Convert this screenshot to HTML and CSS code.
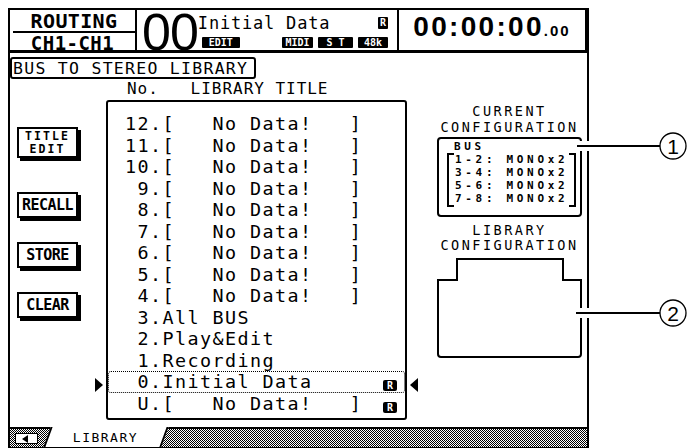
FILE: index.html
```html
<!DOCTYPE html>
<html lang="en">

<head>
    <meta charset="UTF-8">
    <meta name="viewport" content="width=device-width, initial-scale=1.0">
    <title>Bus to Stereo Library</title>
    <link rel="stylesheet" href="styles.css">
</head>

<body>

    <div class="lcd">
        <!-- status bar -->
        <div class="status">
            <div class="routing">
                <div class="routing-top">ROUTING</div>
                <div class="routing-bottom">CH1-CH1</div>
            </div>
            <div class="scene">
                <div class="scene-num">00</div>
                <div class="scene-info">
                    <div class="scene-title"><span>Initial Data</span><span class="tag tag-r">R</span></div>
                    <div class="scene-flags">
                        <span class="tag tag-edit">EDIT</span>
                        <span class="tag tag-midi">MIDI</span>
                        <span class="tag tag-st">S T</span>
                        <span class="tag tag-fs">48k</span>
                    </div>
                </div>
            </div>
            <div class="clock"><span>00:00:00<small>.00</small></span></div>
        </div>

        <div class="page">
            <div class="page-title">BUS TO STEREO LIBRARY</div>

            <div class="page-body">
                <div class="buttons">
                    <div class="btn btn-title">TITLE<br>EDIT</div>
                    <div class="btn">RECALL</div>
                    <div class="btn">STORE</div>
                    <div class="btn">CLEAR</div>
                </div>

                <div class="library">
                    <div class="library-head">No.   LIBRARY TITLE</div>
                    <div class="library-list">
                        <div class="row"><span>12.[   No Data!   ]</span></div>
                        <div class="row"><span>11.[   No Data!   ]</span></div>
                        <div class="row"><span>10.[   No Data!   ]</span></div>
                        <div class="row"><span> 9.[   No Data!   ]</span></div>
                        <div class="row"><span> 8.[   No Data!   ]</span></div>
                        <div class="row"><span> 7.[   No Data!   ]</span></div>
                        <div class="row"><span> 6.[   No Data!   ]</span></div>
                        <div class="row"><span> 5.[   No Data!   ]</span></div>
                        <div class="row"><span> 4.[   No Data!   ]</span></div>
                        <div class="row"><span> 3.All BUS</span></div>
                        <div class="row"><span> 2.Play&amp;Edit</span></div>
                        <div class="row"><span> 1.Recording</span></div>
                        <div class="row selected"><span> 0.Initial Data</span><span class="badge">R</span></div>
                        <div class="row"><span> U.[   No Data!   ]</span><span class="badge">R</span></div>
                    </div>
                </div>

                <div class="config">
                    <div class="config-head">CURRENT<br>CONFIGURATION</div>
                    <div class="config-box">
                        <div class="config-bus">BUS</div>
                        <div class="bracket">1-2: MONOx2<br>3-4: MONOx2<br>5-6: MONOx2<br>7-8: MONOx2</div>
                    </div>
                    <div class="config-head lib-head">LIBRARY<br>CONFIGURATION</div>
                    <svg class="lib-shape" width="146" height="101" viewBox="0 0 146 101">
                        <path d="M20 1 H126 V22 H144 V96 Q144 99 141 99 H4 Q1 99 1 96 V22 H20 Z"
                            fill="none" stroke="#000" stroke-width="2" />
                    </svg>
                </div>
            </div>
        </div>

        <!-- page tabs -->
        <div class="tabs">
            <span class="tab-back"></span>
            <span class="tab"><span>LIBRARY</span></span>
        </div>
    </div>

    <svg class="callouts" width="695" height="448" viewBox="0 0 695 448">
        <g stroke-linecap="butt">
            <line x1="579" y1="146" x2="660" y2="146" stroke="#fff" stroke-width="10" />
            <line x1="577" y1="146" x2="660" y2="146" stroke="#000" stroke-width="2" />
            <line x1="579" y1="313" x2="660" y2="313" stroke="#fff" stroke-width="10" />
            <line x1="576" y1="313" x2="660" y2="313" stroke="#000" stroke-width="2" />
        </g>
        <circle cx="673" cy="146" r="13" fill="#fff" stroke="#000" stroke-width="1.3" />
        <circle cx="673" cy="313" r="13" fill="#fff" stroke="#000" stroke-width="1.3" />
        <text x="673" y="153.5" class="callout-num">1</text>
        <text x="673" y="320.5" class="callout-num">2</text>
    </svg>

</body>

</html>
```

FILE: styles.css
```css
body {
    margin: 0;
    background: #fff;
    color: #000;
    font-family: "DejaVu Sans Mono", monospace;
}

.lcd {
    margin: 8px 0 0 8px;
    width: 581px;
    box-sizing: border-box;
    border: 2px solid #000;
    border-bottom: none;
}

/* status bar */
.status {
    display: flex;
    height: 40px;
    border-bottom: 3px solid #000;
    border-right: 2px solid #000;
}

.routing {
    width: 125px;
    border-right: 2px solid #000;
    font-weight: bold;
    text-align: center;
}

.routing-top {
    height: 21px;
    margin-left: 3px;
    border-bottom: 2px solid #000;
    font-size: 20px;
    line-height: 22px;
    letter-spacing: 0.36px;
}

.routing-bottom {
    height: 17px;
    font-size: 19px;
    line-height: 21.5px;
    letter-spacing: 0.46px;
}

.scene {
    display: flex;
    width: 260px;
    border-right: 2px solid #000;
}

.scene-num {
    margin-left: 5px;
    height: 40px;
    font-family: "Liberation Sans", Arial, sans-serif;
    font-size: 52px;
    line-height: 44px;
    letter-spacing: -1px;
}

.scene-info {
    flex: 1;
    padding: 4px 9px 0 0;
}

.scene-title {
    display: flex;
    justify-content: space-between;
    align-items: center;
    height: 18px;
    font-size: 17px;
    letter-spacing: 0.8px;
}

.scene-flags {
    display: flex;
    gap: 5px;
    margin-top: 5px;
}

.tag {
    display: inline-block;
    height: 11px;
    background: #000;
    color: #fff;
    font-size: 10px;
    font-weight: bold;
    line-height: 11px;
    text-align: center;
    letter-spacing: 0;
    border-radius: 1px;
}

.tag-r {
    width: 10px;
    height: 12px;
    line-height: 12px;
}

.tag-edit {
    width: 38px;
    margin-left: 4px;
    margin-right: auto;
}

.tag-midi {
    width: 31px;
}

.tag-st {
    width: 35px;
}

.tag-fs {
    width: 30px;
}

.clock {
    flex: 1;
    display: flex;
    align-items: center;
    justify-content: center;
    padding-bottom: 3px;
    font-family: "Liberation Sans", Arial, sans-serif;
    font-size: 28px;
    font-weight: bold;
    line-height: 28px;
    letter-spacing: 2.3px;
}

.clock small {
    font-size: 15px;
    letter-spacing: 2px;
}

/* page area */
.page {
    height: 370px;
}

.page-title {
    width: 246px;
    height: 22px;
    margin-top: 4px;
    box-sizing: border-box;
    padding: 1px 0 0 1px;
    border: 2px solid #000;
    border-radius: 3px;
    font-size: 16.5px;
    line-height: 17px;
    letter-spacing: 1.27px;
    white-space: pre;
}

.page-body {
    display: flex;
}

.buttons {
    display: flex;
    flex-direction: column;
    gap: 24px;
    width: 64px;
    margin-left: 7px;
    padding-top: 48px;
}

.btn {
    display: flex;
    align-items: center;
    justify-content: center;
    width: 61px;
    height: 26px;
    box-sizing: border-box;
    border: 2px solid #000;
    box-shadow: 3px 3px 0 #000;
    font-size: 15px;
    font-weight: bold;
    letter-spacing: -0.5px;
}

.btn-title {
    display: block;
    height: 31px;
    margin-bottom: 10px;
    padding-top: 1px;
    font-size: 11.5px;
    line-height: 13.4px;
    letter-spacing: 2.1px;
    text-align: center;
}

.library {
    width: 301px;
    margin-left: 25px;
}

.library-head {
    height: 16px;
    margin-top: 2px;
    padding-left: 21px;
    font-size: 16px;
    line-height: 16px;
    letter-spacing: 0.97px;
    white-space: pre;
}

.library-list {
    margin-top: 3px;
    padding: 11px 0 4px;
    border: 2px solid #000;
    border-radius: 3px;
}

.row {
    position: relative;
    display: flex;
    justify-content: space-between;
    height: 21.5px;
    padding: 0 8px 0 17px;
    font-size: 18.4px;
    line-height: 21.5px;
    letter-spacing: 1.42px;
    white-space: pre;
}

.row.selected {
    outline: 1px dotted #000;
    outline-offset: -1px;
    border-radius: 3px;
}

/* cursor arrows either side of the current entry */
.row.selected::before,
.row.selected::after {
    content: "";
    position: absolute;
    top: 7px;
    border-top: 7px solid transparent;
    border-bottom: 7px solid transparent;
}

.row.selected::before {
    left: -13px;
    border-left: 8px solid #000;
}

.row.selected::after {
    right: -13px;
    border-right: 8px solid #000;
}

.badge {
    align-self: flex-start;
    width: 14px;
    height: 11px;
    margin-top: 9px;
    background: #000;
    color: #fff;
    font-size: 10px;
    font-weight: bold;
    line-height: 11px;
    text-align: center;
    letter-spacing: 0;
    border-radius: 2px;
}

.config {
    width: 145px;
    margin-left: 30px;
    padding-top: 25px;
}

.config-head {
    font-size: 13.5px;
    line-height: 15.8px;
    letter-spacing: 2.5px;
    text-align: center;
}

.config-box {
    height: 80px;
    margin-top: 1px;
    box-sizing: border-box;
    padding: 2px 0 0 8px;
    border: 2px solid #000;
    border-radius: 4px;
    font-size: 11px;
    font-weight: bold;
    letter-spacing: 3.68px;
}

.config-bus {
    height: 12.8px;
    margin-left: 7px;
    line-height: 12.8px;
}

/* bracket round the bus pairs, ticks drawn as gradients */
.bracket {
    width: 129px;
    box-sizing: border-box;
    padding: 1px 0 1px 6px;
    border-left: 2px solid #000;
    border-right: 2px solid #000;
    line-height: 12.8px;
    white-space: pre;
    background:
        linear-gradient(#000, #000) left top / 5px 2px no-repeat,
        linear-gradient(#000, #000) left bottom / 5px 2px no-repeat,
        linear-gradient(#000, #000) right top / 5px 2px no-repeat,
        linear-gradient(#000, #000) right bottom / 5px 2px no-repeat;
}

.lib-head {
    margin-top: 6px;
}

.lib-shape {
    display: block;
    margin-top: 4px;
}

/* page tabs */
.tabs {
    display: flex;
    align-items: center;
    height: 18px;
    border-top: 2px solid #000;
    border-bottom: 3px solid #000;
    background: repeating-conic-gradient(#000 0 25%, #fff 0 50%) 0 0 / 2px 2px;
}

.tab-back {
    position: relative;
    width: 23px;
    height: 11px;
    margin-left: 5px;
    box-sizing: border-box;
    border: 1px solid #000;
    background: #fff;
}

.tab-back::before {
    content: "";
    position: absolute;
    left: 6px;
    top: 1px;
    border-top: 4px solid transparent;
    border-bottom: 4px solid transparent;
    border-right: 6px solid #000;
}

.tab {
    display: flex;
    align-items: center;
    justify-content: center;
    width: 118px;
    height: 20px;
    margin: -2px 0 0 9px;
    box-sizing: border-box;
    background: #fff;
    border-left: 2px solid #000;
    border-right: 2px solid #000;
    transform: skewX(-20deg);
}

.tab span {
    transform: skewX(20deg);
    font-size: 13px;
    letter-spacing: 1.5px;
    line-height: 13px;
}

/* callout numbers beside the screen */
.callouts {
    position: absolute;
    left: 0;
    top: 0;
    pointer-events: none;
}

.callout-num {
    font-family: "Liberation Sans", Arial, sans-serif;
    font-size: 21px;
    text-anchor: middle;
}
```
